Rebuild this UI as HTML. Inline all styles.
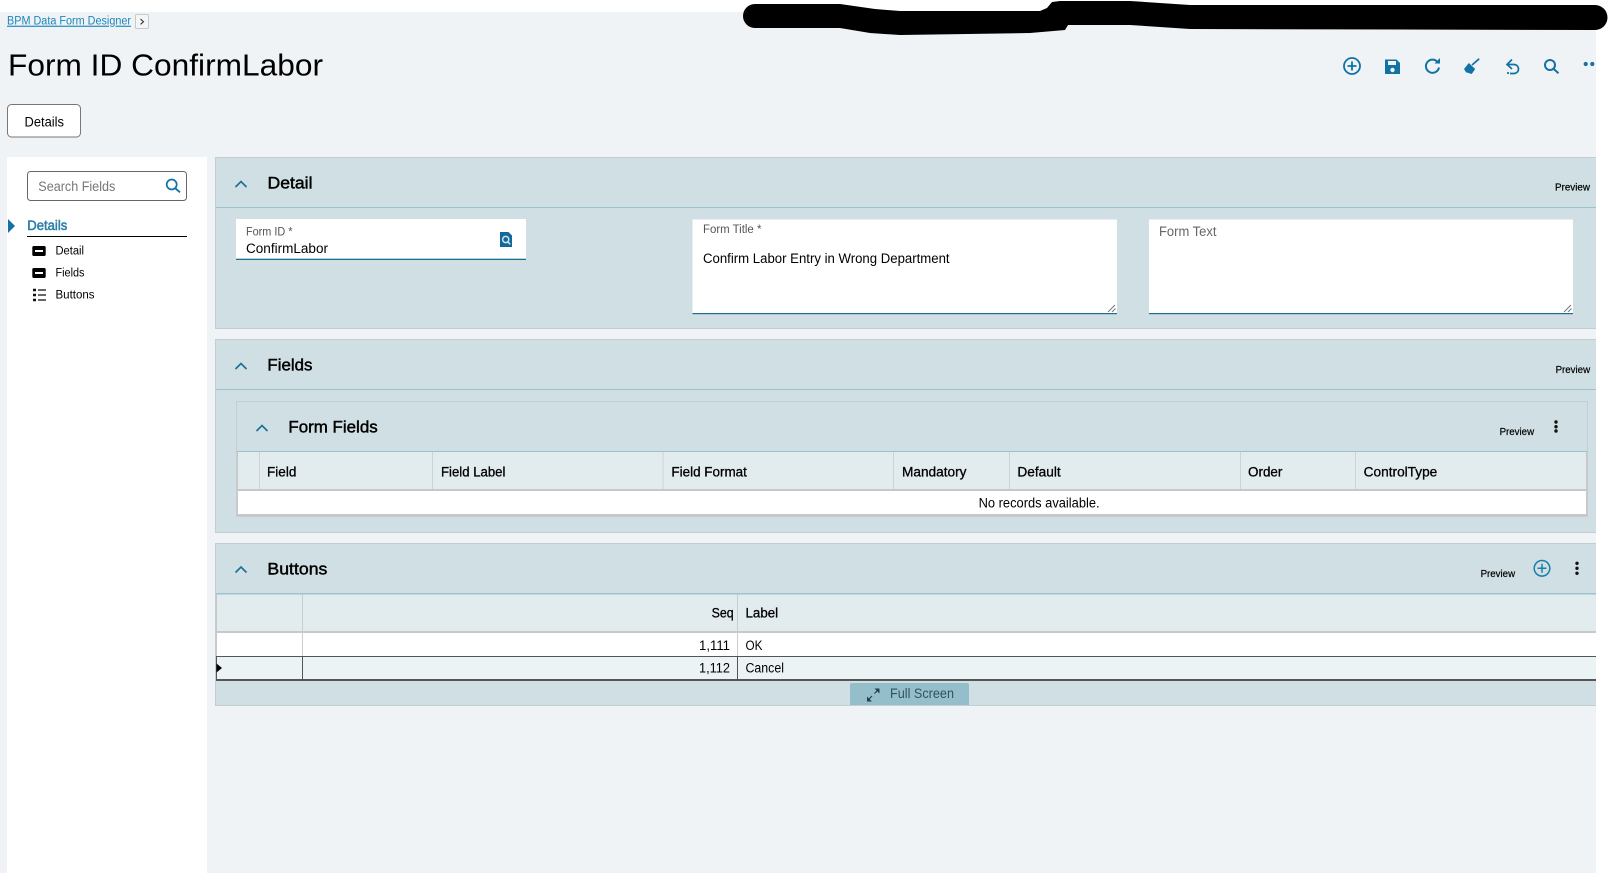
<!DOCTYPE html>
<html lang="en">
<head>
<meta charset="utf-8">
<title>Form ID ConfirmLabor</title>
<style>
html,body{margin:0;padding:0;background:#fff;width:1608px;height:873px;overflow:hidden}
svg{display:block}
text{font-family:"Liberation Sans",sans-serif;fill:#000;white-space:pre}
.h{font-size:17px;stroke:#000;stroke-width:.45px}
.th{font-size:13.5px;stroke:#000;stroke-width:.3px}
.b{font-size:13.5px}
.pv{font-size:10px;stroke:#000;stroke-width:.2px}
.lb{font-size:11.5px;fill:#555}
.nav{font-size:11.5px}
.chev{fill:none;stroke:#1a6f93;stroke-width:1.6}
.ic{fill:none;stroke:#1272a5;stroke-width:2}
</style>
</head>
<body>
<svg width="1608" height="873" viewBox="0 0 1608 873" xmlns="http://www.w3.org/2000/svg">
<rect x="0" y="12" width="1596" height="861" fill="#eff3f6"/>

<!-- redaction scribble -->
<path d="M755 4H840L875 9 900 11H1040L1047 8 1052 2 1060 1H1130L1190 5H1595A12 12 0 0 1 1595 30L1190 29 1130 25H1068L1065 30 1030 33 900 35 870 33 840 28H755A12 12 0 0 1 755 4Z" fill="#000"/>

<!-- breadcrumb -->
<text x="7" y="24.700" font-size="11.500" textLength="124" lengthAdjust="spacingAndGlyphs" style="fill:#1d86bb" text-decoration="underline">BPM Data Form Designer</text>
<rect x="135.500" y="14.500" width="13" height="14" rx="1" fill="#f3f5f6" stroke="#c4c9cc"/>
<path d="M140.500 19l3 2.700-3 2.700" fill="none" stroke="#333" stroke-width="1.100"/>

<!-- title -->
<text x="8" y="75.500" font-size="31" textLength="315" lengthAdjust="spacingAndGlyphs">Form ID ConfirmLabor</text>

<!-- toolbar icons -->
<circle cx="1352" cy="66" r="8" fill="none" stroke="#1272a5" stroke-width="1.800"/>
<path d="M1347.500 66h9M1352 61.500v9" fill="none" stroke="#1272a5" stroke-width="1.800"/>
<path d="M1385 59.500h11.500l3.500 3.500v11h-15z" fill="#1272a5"/>
<rect x="1388" y="61" width="8" height="4" fill="#eff3f6"/>
<circle cx="1392.500" cy="70" r="2.200" fill="#eff3f6"/>
<path d="M1438 62.500a6.600 6.600 0 1 0 1 5" class="ic"/>
<path d="M1434.500 63.500h5.500v-5.500z" fill="#1272a5"/>
<path d="M1472 65l7.200-6.200" fill="none" stroke="#1272a5" stroke-width="1.700"/>
<path d="M1464 69l4.800-6 6.400 6-3.500 5-5.700-1.800z" fill="#1272a5"/>
<path d="M1512 59.500l-5 5 5 4.500M1507.500 64.500h6.500a4.500 4.500 0 0 1 0 9h-4M1507 73h2" fill="none" stroke="#1272a5" stroke-width="1.700"/>
<circle cx="1550" cy="65" r="5" class="ic"/>
<path d="M1553.500 68.700l5 4.500" class="ic"/>
<circle cx="1585.700" cy="64" r="2.100" fill="#1272a5"/>
<circle cx="1592.300" cy="64" r="2.100" fill="#1272a5"/>

<!-- details button -->
<rect x="7.500" y="104.500" width="73" height="32.500" rx="4" fill="#fff" stroke="#777"/>
<text x="24.500" y="126.300" class="b" textLength="39.500" lengthAdjust="spacingAndGlyphs">Details</text>

<!-- sidebar -->
<rect x="7" y="157" width="200" height="716" fill="#fff"/>
<rect x="27.500" y="171.500" width="159" height="29" rx="3" fill="#fff" stroke="#666"/>
<text x="38.300" y="191" class="b" textLength="77" lengthAdjust="spacingAndGlyphs" style="fill:#777">Search Fields</text>
<circle cx="171.700" cy="184.500" r="5" fill="none" stroke="#1272a5" stroke-width="1.700"/>
<path d="M175.300 188.300l4.700 4" fill="none" stroke="#1272a5" stroke-width="1.900"/>
<path d="M8 219l7 7-7 7z" fill="#1272a5"/>
<text x="27.300" y="230" font-size="14" textLength="40" lengthAdjust="spacingAndGlyphs" style="fill:#2a7fa8;stroke:#2a7fa8;stroke-width:.55px">Details</text>
<rect x="27" y="236" width="160" height="1" fill="#000"/>
<rect x="32.300" y="246" width="13.400" height="10" rx="1.500" fill="#000"/>
<rect x="35" y="250" width="8" height="2" fill="#fff"/>
<text x="55.500" y="254.700" class="nav" textLength="28.500" lengthAdjust="spacingAndGlyphs">Detail</text>
<rect x="32.300" y="268" width="13.400" height="10" rx="1.500" fill="#000"/>
<rect x="35" y="272" width="8" height="2" fill="#fff"/>
<text x="55.500" y="276.700" class="nav" textLength="29" lengthAdjust="spacingAndGlyphs">Fields</text>
<path d="M33 290h3M33 295h3M33 300h3" stroke="#111" stroke-width="2.400"/>
<path d="M38 290h8M38 295h8M38 300h8" stroke="#333" stroke-width="1.400"/>
<text x="55.500" y="298.700" class="nav" textLength="39" lengthAdjust="spacingAndGlyphs">Buttons</text>

<!-- Detail panel -->
<rect x="215.500" y="157.500" width="1390" height="171" fill="#cfdfe3" stroke="#c3ced2"/>
<rect x="216" y="207" width="1380" height="1" fill="#9cc3cd"/>
<path d="M235.500 187l5.500-5.500 5.500 5.500" class="chev"/>
<text x="267.500" y="188.700" class="h" textLength="45" lengthAdjust="spacingAndGlyphs">Detail</text>
<text x="1555" y="190.700" class="pv" textLength="35" lengthAdjust="spacingAndGlyphs">Preview</text>

<rect x="236" y="219" width="290" height="41" fill="#fff"/>
<rect x="236" y="258.700" width="290" height="1.300" fill="#1c6d94"/>
<text x="246" y="235.700" class="lb" textLength="46.500" lengthAdjust="spacingAndGlyphs">Form ID *</text>
<text x="246" y="253" class="b" textLength="82" lengthAdjust="spacingAndGlyphs">ConfirmLabor</text>
<path d="M500 232h8.500l3.500 3.500V247h-12z" fill="#12689b"/>
<circle cx="505.700" cy="239.500" r="3.100" fill="#12689b" stroke="#cfe3ec" stroke-width="1.500"/>
<path d="M507.800 241.800l2.400 2.600" stroke="#cfe3ec" stroke-width="1.500"/>

<rect x="692.500" y="219.500" width="424.500" height="94.500" fill="#fff"/>
<rect x="692.500" y="313" width="424.500" height="1.200" fill="#1c6d94"/>
<text x="703" y="233" class="lb" textLength="58.400" lengthAdjust="spacingAndGlyphs">Form Title *</text>
<text x="703" y="263" class="b" textLength="246.600" lengthAdjust="spacingAndGlyphs">Confirm Labor Entry in Wrong Department</text>
<path d="M1108 312l7-7M1112 312l3.500-3.500" stroke="#777" stroke-width="1"/>

<rect x="1149" y="219.500" width="424" height="94.500" fill="#fff"/>
<rect x="1149" y="313" width="424" height="1.200" fill="#1c6d94"/>
<text x="1159" y="236" class="b" textLength="57.500" lengthAdjust="spacingAndGlyphs" style="fill:#666">Form Text</text>
<path d="M1564 312l7-7M1568 312l3.500-3.500" stroke="#777" stroke-width="1"/>

<!-- Fields panel -->
<rect x="215.500" y="339.500" width="1390" height="193" fill="#cfdfe3" stroke="#c3ced2"/>
<rect x="216" y="389" width="1380" height="1" fill="#9cc3cd"/>
<path d="M235.500 369l5.500-5.500 5.500 5.500" class="chev"/>
<text x="267.400" y="370.500" class="h" textLength="45" lengthAdjust="spacingAndGlyphs">Fields</text>
<text x="1555.600" y="373" class="pv" textLength="34.500" lengthAdjust="spacingAndGlyphs">Preview</text>

<rect x="236.500" y="401.500" width="1351" height="115" fill="#cfdfe3" stroke="#c3ced2"/>
<rect x="237" y="451" width="1350" height="1" fill="#9cc3cd"/>
<path d="M256.500 431l5.500-5.500 5.500 5.500" class="chev"/>
<text x="288.400" y="432.500" class="h" textLength="89.300" lengthAdjust="spacingAndGlyphs">Form Fields</text>
<text x="1499.600" y="435" class="pv" textLength="34.500" lengthAdjust="spacingAndGlyphs">Preview</text>
<circle cx="1556" cy="422" r="1.700" fill="#111"/>
<circle cx="1556" cy="426.700" r="1.700" fill="#111"/>
<circle cx="1556" cy="431" r="1.700" fill="#111"/>

<rect x="237.500" y="452" width="1349" height="37" fill="#e2ebee"/>
<rect x="237.500" y="489" width="1349" height="2" fill="#c8c8c8"/>
<rect x="237.500" y="491" width="1349" height="23" fill="#fff"/>
<rect x="237" y="514" width="1350" height="2.500" fill="#c8c8c8"/>
<rect x="237" y="452" width="1" height="62" fill="#c8c8c8"/>
<rect x="1586" y="452" width="1.500" height="64" fill="#c8c8c8"/>
<path d="M259.500 452v37M432.500 452v37M663 452v37M893.500 452v37M1009.500 452v37M1240.500 452v37M1355.500 452v37" stroke="#ccd3d6" stroke-width="1"/>
<text x="267" y="476.300" class="th" textLength="29.400" lengthAdjust="spacingAndGlyphs">Field</text>
<text x="441" y="476.300" class="th" textLength="64.400" lengthAdjust="spacingAndGlyphs">Field Label</text>
<text x="671.400" y="476.300" class="th" textLength="75.500" lengthAdjust="spacingAndGlyphs">Field Format</text>
<text x="902" y="476.300" class="th" textLength="64.500" lengthAdjust="spacingAndGlyphs">Mandatory</text>
<text x="1017.400" y="476.300" class="th" textLength="43.300" lengthAdjust="spacingAndGlyphs">Default</text>
<text x="1248" y="476.300" class="th" textLength="34.400" lengthAdjust="spacingAndGlyphs">Order</text>
<text x="1363.700" y="476.300" class="th" textLength="73.600" lengthAdjust="spacingAndGlyphs">ControlType</text>
<text x="978.600" y="507.600" class="b" textLength="121" lengthAdjust="spacingAndGlyphs">No records available.</text>

<!-- Buttons panel -->
<rect x="215.500" y="543.500" width="1390" height="162" fill="#cfdfe3" stroke="#c3ced2"/>
<rect x="216" y="593" width="1380" height="1.500" fill="#9cc3cd"/>
<path d="M235.500 572.500l5.500-5.500 5.500 5.500" class="chev"/>
<text x="267.400" y="574.700" class="h" textLength="60" lengthAdjust="spacingAndGlyphs">Buttons</text>
<text x="1480.600" y="577" class="pv" textLength="34.500" lengthAdjust="spacingAndGlyphs">Preview</text>
<circle cx="1542" cy="568.300" r="7.800" fill="none" stroke="#1a7ea8" stroke-width="1.500"/>
<path d="M1537.500 568.300h9M1542 563.800v9" fill="none" stroke="#1a7ea8" stroke-width="1.500"/>
<circle cx="1577" cy="563.300" r="1.700" fill="#111"/>
<circle cx="1577" cy="568.300" r="1.700" fill="#111"/>
<circle cx="1577" cy="573.300" r="1.700" fill="#111"/>

<rect x="216.500" y="594.500" width="1379.500" height="37" fill="#e2ebee"/>
<rect x="216.500" y="631" width="1379.500" height="2" fill="#c8c8c8"/>
<rect x="216.500" y="633" width="1379.500" height="23" fill="#fff"/>
<rect x="216.500" y="656" width="1379.500" height="24" fill="#ecf3f5"/>
<rect x="216" y="594.500" width="1" height="62" fill="#c8c8c8"/>
<path d="M302.500 594.500v62M737.500 594.500v62" stroke="#c8cfd2" stroke-width="1"/>
<rect x="216" y="656" width="1380" height="1" fill="#555"/>
<path d="M216.500 656v24M302.500 656v24M737.500 656v24" stroke="#555" stroke-width="1"/>
<rect x="216" y="679" width="1380" height="2" fill="#555"/>
<path d="M216.500 663.500l5.500 4.500-5.500 4.500z" fill="#000"/>
<text x="711.600" y="617.700" class="th" textLength="22" lengthAdjust="spacingAndGlyphs">Seq</text>
<text x="745.500" y="617.700" class="th" textLength="32.600" lengthAdjust="spacingAndGlyphs">Label</text>
<text x="699" y="649.800" class="b" textLength="31" lengthAdjust="spacingAndGlyphs">1,111</text>
<text x="745.500" y="649.800" class="b" textLength="17" lengthAdjust="spacingAndGlyphs">OK</text>
<text x="699" y="672.700" class="b" textLength="31" lengthAdjust="spacingAndGlyphs">1,112</text>
<text x="745.500" y="672.700" class="b" textLength="38.500" lengthAdjust="spacingAndGlyphs">Cancel</text>

<!-- full screen -->
<path d="M850 685a2 2 0 0 1 2-2h115a2 2 0 0 1 2 2v20H850z" fill="#94bfca"/>
<path d="M867.500 700.500l4.500-4.500M874.500 693.500l4.500-4.500" stroke="#24404e" stroke-width="1.200"/>
<path d="M867 696.500v5h5zM879.500 693.500v-5h-5z" fill="#24404e"/>
<text x="890" y="698" class="b" textLength="64" lengthAdjust="spacingAndGlyphs" style="fill:#33505f">Full Screen</text>

<!-- right-edge white margin clips panels at x=1596 -->
<rect x="1596" y="40" width="12" height="833" fill="#fff"/>
</svg>
</body>
</html>
